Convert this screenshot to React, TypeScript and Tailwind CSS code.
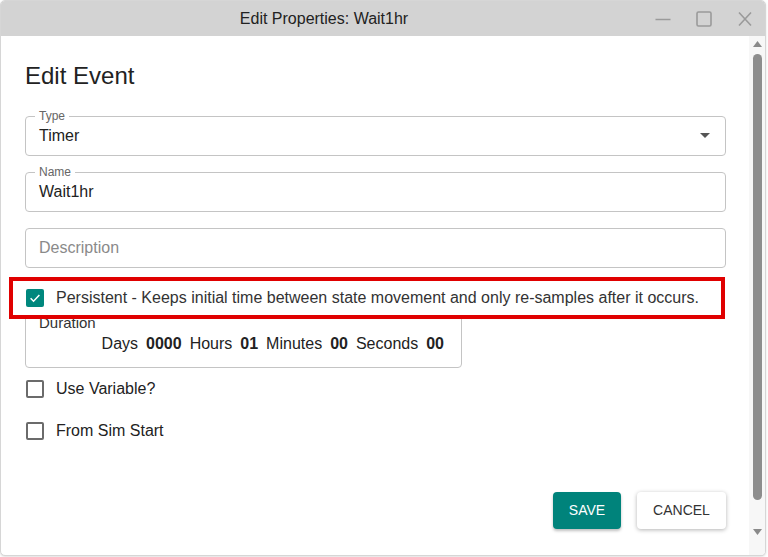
import React from "react";

const font = { fontFamily: '"Liberation Sans", Arial, sans-serif' };

function Check({ checked }: { checked?: boolean }) {
  if (checked) {
    return (
      <span className="flex h-[18px] w-[18px] shrink-0 items-center justify-center rounded-[2px] bg-[#00877d]">
        <svg width="14" height="14" viewBox="0 0 24 24" fill="none">
          <path d="M4.5 12.5l5 5L19.5 7" stroke="white" strokeWidth="2.6" />
        </svg>
      </span>
    );
  }
  return <span className="h-[18px] w-[18px] shrink-0 rounded-[2px] border-2 border-[#6b6b6b]" />;
}

function Field({ label, value, placeholder, select }: { label?: string; value?: string; placeholder?: string; select?: boolean }) {
  return (
    <div className="relative flex h-10 items-center rounded-[4px] border border-[#c4c4c4] px-[13px]">
      {label && (
        <span className="absolute left-[9px] top-[-8px] bg-white px-1 text-[12px] leading-[14px] text-[#666]">{label}</span>
      )}
      {value ? (
        <span className="text-[16px] text-[#222]">{value}</span>
      ) : (
        <span className="text-[16px] text-[#8a8a8a]">{placeholder}</span>
      )}
      {select && (
        <svg className="absolute right-[15px] top-[16px]" width="10" height="5" viewBox="0 0 10 5">
          <path d="M0 0h10L5 5z" fill="#555" />
        </svg>
      )}
    </div>
  );
}

export default function App() {
  return (
    <div className="h-[557px] w-[768px] bg-white" style={font}>
      <div className="relative flex h-[556px] w-[766px] flex-col overflow-hidden rounded-[5px] border border-[#d6d6d6] bg-white shadow-sm">
        {/* Title bar */}
        <div className="flex h-[35px] shrink-0 items-center bg-[#d3d3d3]">
          <div className="flex-1 pt-[1px] text-center text-[16px] text-[#222]">Edit Properties: Wait1hr</div>
          <div className="flex w-[118px] items-center gap-[25px] pl-[8px] text-[#9a9a9a]">
            <svg width="16" height="16" viewBox="0 0 16 16">
              <path d="M0.5 8.5h15" stroke="#9a9a9a" strokeWidth="1.6" />
            </svg>
            <svg width="16" height="16" viewBox="0 0 16 16">
              <rect x="1" y="1" width="14" height="14" rx="1.5" fill="none" stroke="#9a9a9a" strokeWidth="1.6" />
            </svg>
            <svg width="16" height="16" viewBox="0 0 16 16">
              <path d="M2 1.5l12 13M14 1.5l-12 13" stroke="#9a9a9a" strokeWidth="1.6" />
            </svg>
          </div>
        </div>

        {/* Body */}
        <div className="flex flex-1">
          <div className="flex-1 pl-[24px] pr-[23px] pt-[26px]">
            <h1 className="text-[24px] leading-[28px] text-[#222]">Edit Event</h1>
            <div className="mt-[26px] flex flex-col gap-4">
              <Field label="Type" value="Timer" select />
              <Field label="Name" value="Wait1hr" />
              <Field placeholder="Description" />
            </div>

            <div className="mt-[35px] h-[65px] w-[437px] rounded-[4px] border border-[#c4c4c4] pl-[13px] pr-[17px] pt-[10px]">
              <div className="text-[15px] leading-[18px] text-[#333]">Duration</div>
              <div className="mt-[2px] flex justify-end gap-[8px] text-[16px] leading-5 text-[#222]">
                <span>Days</span>
                <b>0000</b>
                <span>Hours</span>
                <b>01</b>
                <span>Minutes</span>
                <b>00</b>
                <span>Seconds</span>
                <b>00</b>
              </div>
            </div>

            <div className="flex h-[42px] items-center gap-3 pl-[1px] text-[16px] text-[#222]">
              <Check />
              <span>Use Variable?</span>
            </div>
            <div className="flex h-[42px] items-center gap-3 pl-[1px] text-[16px] text-[#222]">
              <Check />
              <span>From Sim Start</span>
            </div>

            <div className="mt-10 flex justify-end gap-4">
              <button className="h-[37px] w-[68px] rounded-[4px] bg-[#00837b] text-[14px] text-white shadow-[0_2px_3px_rgba(0,0,0,0.25)]">
                SAVE
              </button>
              <button className="h-[37px] w-[89px] rounded-[4px] bg-white text-[14px] text-[#333] shadow-[0_1px_4px_rgba(0,0,0,0.3)]">
                CANCEL
              </button>
            </div>
          </div>

          {/* Scrollbar */}
          <div className="flex w-[16px] flex-col items-center bg-[#f7f7f7] pb-[20px] pt-[5px]">
            <svg width="9" height="6" viewBox="0 0 9 6">
              <path d="M0 6h9L4.5 0z" fill="#8a8a8a" />
            </svg>
            <div className="mt-[7px] h-[446px] w-[9px] rounded-full bg-[#8d8d8d]" />
            <div className="flex-1" />
            <svg width="9" height="6" viewBox="0 0 9 6">
              <path d="M0 0h9L4.5 6z" fill="#8a8a8a" />
            </svg>
          </div>
        </div>

        {/* Annotation overlay */}
        <div className="absolute left-[8px] top-[276px] flex h-[42px] w-[716px] items-center gap-3 border-4 border-[#e00000] bg-white pl-[13px] text-[16px] text-[#333]">
          <Check checked />
          <span>Persistent - Keeps initial time between state movement and only re-samples after it occurs.</span>
        </div>
      </div>
    </div>
  );
}
